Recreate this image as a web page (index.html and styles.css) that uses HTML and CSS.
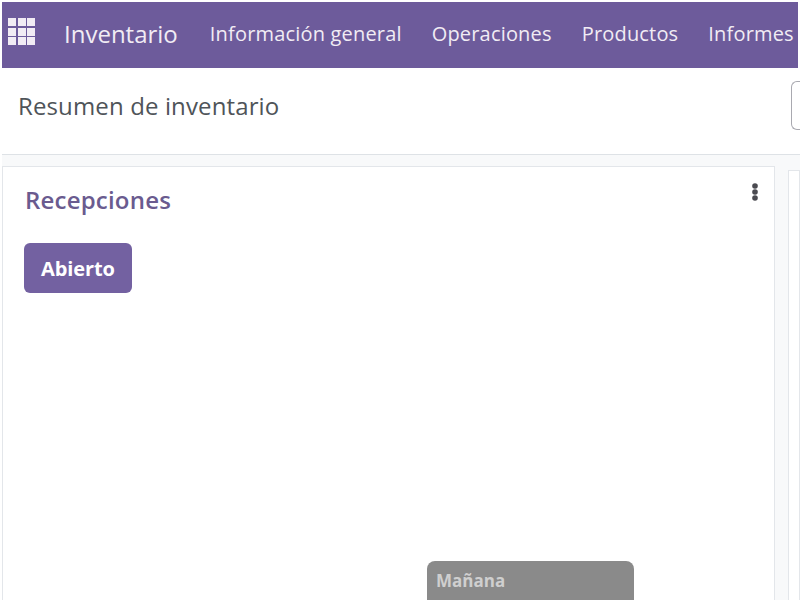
FILE: index.html
```html
<!DOCTYPE html>
<html lang="es">
<head>
    <meta charset="UTF-8">
    <meta name="viewport" content="width=device-width, initial-scale=1.0">
    <title>Resumen de inventario</title>
    <link rel="stylesheet" href="styles.css">
</head>
<body>

    <nav class="navbar">
        <svg class="apps" width="28" height="28" viewBox="0 0 28 28">
            <g fill="#f1ecf4">
                <rect x="0" y="0" width="8" height="8"/>
                <rect x="10" y="0" width="8" height="8"/>
                <rect x="19" y="0" width="8" height="8"/>
                <rect x="0" y="10" width="8" height="8"/>
                <rect x="10" y="10" width="8" height="8"/>
                <rect x="19" y="10" width="8" height="8"/>
                <rect x="0" y="19" width="8" height="8"/>
                <rect x="10" y="19" width="8" height="8"/>
                <rect x="19" y="19" width="8" height="8"/>
            </g>
        </svg>
        <span class="marca">Inventario</span>
        <a class="menu">Información general</a>
        <a class="menu">Operaciones</a>
        <a class="menu">Productos</a>
        <a class="menu">Informes</a>
    </nav>

    <div class="panel">
        <h1>Resumen de inventario</h1>
        <div class="buscador"></div>
    </div>

    <main class="contenido">
        <section class="tarjeta">
            <div class="cabecera">
                <h2>Recepciones</h2>
                <svg class="puntos" width="6" height="18" viewBox="0 0 6 18">
                    <circle cx="3" cy="3" r="2.8" fill="#4a4a50"/>
                    <circle cx="3" cy="9" r="2.8" fill="#4a4a50"/>
                    <circle cx="3" cy="15" r="2.8" fill="#4a4a50"/>
                </svg>
            </div>
            <button class="btn">Abierto</button>
            <div class="tooltip">Mañana</div>
        </section>
        <section class="tarjeta-lado"></section>
    </main>

</body>
</html>
```

FILE: styles.css
```css
body {
    margin: 0;
    padding: 2px 2px 0 2px;
    box-sizing: border-box;
    height: 600px;
    overflow: hidden;
    background-color: #fff;
    font-family: "Open Sans", "Noto Sans", sans-serif;
}

.navbar {
    display: flex;
    align-items: center;
    height: 66px;
    padding-left: 6px;
    padding-bottom: 4px;
    box-sizing: border-box;
    background-color: #6d5b9b;
    color: #f1ecf4;
    white-space: nowrap;
    overflow: hidden;
}

.apps {
    flex: none;
    margin-top: -3px;
}

.marca {
    margin-left: 28px;
    margin-right: 32px;
    font-size: 24px;
}

.menu {
    margin-right: 30px;
    font-size: 20px;
    letter-spacing: 0.18px;
}

.panel {
    display: flex;
    align-items: center;
    justify-content: space-between;
    height: 87px;
    padding: 0 0 12px 16px;
    box-sizing: border-box;
    border-bottom: 1px solid #dee2e6;
    margin-right: -2px;
}

.panel h1 {
    margin: 0;
    font-size: 24px;
    font-weight: 400;
    letter-spacing: 0.13px;
    color: #4f5459;
}

.buscador {
    width: 8px;
    height: 47px;
    border: 1px solid #a9a9b0;
    border-right: none;
    border-radius: 6px 0 0 6px;
}

.contenido {
    display: flex;
    gap: 13px;
    height: 470px;
    padding-top: 11px;
    box-sizing: border-box;
    margin-right: -2px;
    background-color: #f8f9fa;
}

.tarjeta {
    position: relative;
    flex: none;
    width: 773px;
    padding: 15px 22px;
    box-sizing: border-box;
    background-color: #fff;
    border: 1px solid #e3e6ea;
}

.tarjeta-lado {
    flex: 1;
    margin-top: 4px;
    background-color: #fff;
    border: 1px solid #e3e6ea;
}

.cabecera {
    display: flex;
    justify-content: space-between;
    align-items: flex-start;
}

.cabecera h2 {
    margin: 0;
    font-size: 24px;
    line-height: 36px;
    font-weight: 600;
    letter-spacing: 0.2px;
    color: #6a5b8f;
}

.puntos {
    margin-top: 1px;
    margin-right: -6px;
}

.btn {
    display: block;
    width: 108px;
    height: 50px;
    margin-top: 25px;
    margin-left: -1px;
    padding: 0;
    border: none;
    border-radius: 6px;
    background-color: #7361a1;
    color: white;
    font-family: inherit;
    font-size: 20px;
    font-weight: 700;
    letter-spacing: -0.1px;
}

.tooltip {
    position: absolute;
    left: 424px;
    top: 394px;
    width: 207px;
    height: 60px;
    padding: 8px 9px;
    box-sizing: border-box;
    background-color: #8a8a8a;
    border-radius: 8px 8px 0 0;
    color: #cfcfcf;
    font-size: 17px;
    font-weight: 700;
}
```
